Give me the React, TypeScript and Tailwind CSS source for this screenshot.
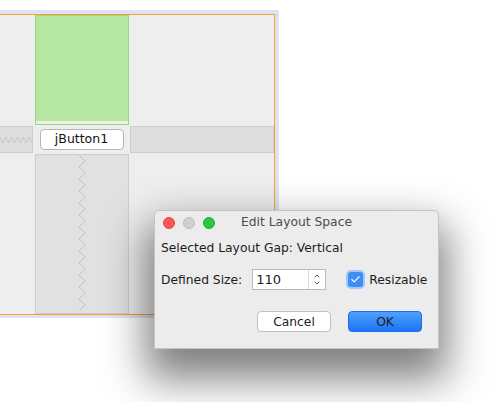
import { Check, ChevronDown, ChevronUp } from "lucide-react"

function ZigV() {
  return (
    <svg width="12" height="158" viewBox="0 0 12 158" className="mx-auto">
      <polyline
        fill="none"
        stroke="#c4c4c4"
        strokeWidth="1"
        points={Array.from({ length: 27 }, (_, i) => `${i % 2 ? 9 : 3},${i * 6}`).join(" ")}
      />
    </svg>
  )
}

function ZigH() {
  return (
    <svg width="33" height="10" viewBox="0 0 33 10">
      <polyline
        fill="none"
        stroke="#c4c4c4"
        strokeWidth="1"
        points={Array.from({ length: 12 }, (_, i) => `${i * 3},${i % 2 ? 8 : 2}`).join(" ")}
      />
    </svg>
  )
}

function Canvas() {
  return (
    <div className="mt-[10px] w-[279px] bg-[#e0e0f8] pt-[4px] pr-[4px] pb-[3px]">
      <div className="h-[301px] border-t border-r border-b border-[#f5a623] bg-[#eeeeee] grid grid-cols-[33px_95px_144px] grid-rows-[110px_27px_1fr] gap-x-[1px] gap-y-[1px] pl-0">
        <div />
        <div className="ml-[1px] border border-[#9fd48b] bg-[#b6e7a2] flex flex-col justify-end">
          <div className="h-[3px] bg-[#e9f3e0]" />
        </div>
        <div />
        <div className="border border-[#cdcdcd] border-l-0 bg-[#dedede] flex items-center">
          <ZigH />
        </div>
        <div className="flex items-center justify-center">
          <div className="w-[84px] h-[21px] rounded-[4px] border border-[#b5b5b5] bg-white flex items-center justify-center text-[12.5px] text-[#111]">
            jButton1
          </div>
        </div>
        <div className="border border-[#cdcdcd] bg-[#dedede]" />
        <div />
        <div className="ml-[1px] border border-[#cdcdcd] bg-[#e1e1e1] overflow-hidden">
          <ZigV />
        </div>
        <div />
      </div>
    </div>
  )
}

function Dialog() {
  return (
    <div className="absolute left-[154px] top-[210px] w-[285px] h-[139px] rounded-t-[5px] border border-[#c4c4c4] bg-[#ececec] shadow-[0_22px_42px_8px_rgba(0,0,0,0.5)] text-[12.3px] text-[#1d1d1d]">
      <div className="relative h-[23px] flex items-center px-[8px] gap-[8px] rounded-t-[5px]">
        <span className="w-[12px] h-[12px] rounded-full bg-[#fc5753] border border-[#df4744]" />
        <span className="w-[12px] h-[12px] rounded-full bg-[#d0d0d0] border border-[#bdbdbd]" />
        <span className="w-[12px] h-[12px] rounded-full bg-[#28c93f] border border-[#1dad2b]" />
        <span className="absolute inset-0 flex items-center justify-center text-[#4d4d4d] text-[12.3px]">
          Edit Layout Space
        </span>
      </div>
      <div className="px-[6px] pt-[5px]">Selected Layout Gap: Vertical</div>
      <div className="flex items-center px-[6px] mt-[12px]">
        <span>Defined Size:</span>
        <div className="ml-[10px] flex h-[21px] w-[74px] border border-[#b9b9b9] bg-white">
          <span className="flex-1 pl-[3px] text-[13px] leading-[19px]">110</span>
          <div className="w-[17px] border-l border-[#d8d8d8] flex flex-col items-center justify-center text-[#333]">
            <ChevronUp size={8} strokeWidth={2.5} className="-mb-[1px]" />
            <ChevronDown size={8} strokeWidth={2.5} />
          </div>
        </div>
        <div className="ml-[22px] w-[15px] h-[15px] rounded-[3px] bg-[#3b8ff6] shadow-[0_0_0_2px_rgba(100,160,250,0.5)] flex items-center justify-center">
          <Check size={11} strokeWidth={2.5} className="text-white" />
        </div>
        <span className="ml-[6px]">Resizable</span>
      </div>
      <div className="flex justify-end gap-[17px] pr-[16px] mt-[21px]">
        <div className="w-[74px] h-[21px] rounded-[4px] border border-[#c0c0c0] bg-white flex items-center justify-center">
          Cancel
        </div>
        <div className="w-[74px] h-[21px] rounded-[4px] bg-gradient-to-b from-[#4fa0fd] to-[#1b73f6] border border-[#1b6fe8] flex items-center justify-center">
          OK
        </div>
      </div>
    </div>
  )
}

export default function App() {
  return (
    <div className="relative w-[494px] h-[402px] bg-white overflow-hidden font-['DejaVu_Sans',sans-serif]">
      <Canvas />
      <Dialog />
    </div>
  )
}
